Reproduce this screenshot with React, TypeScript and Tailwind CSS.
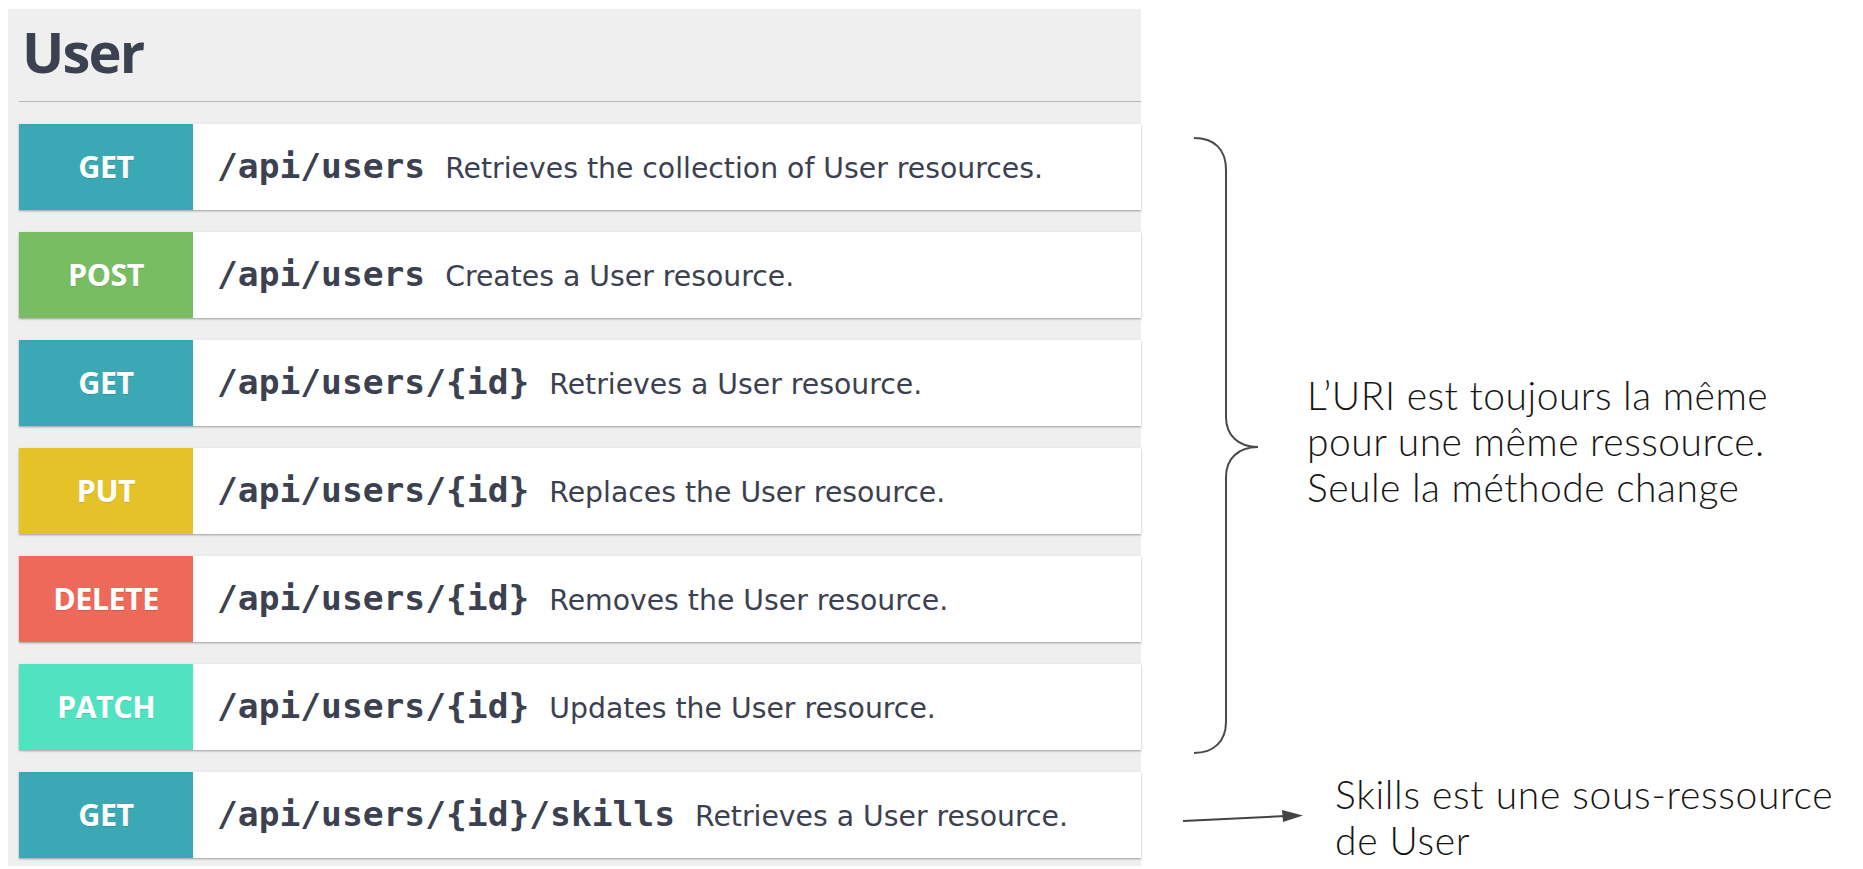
const endpoints = [
  { method: 'GET', color: 'bg-[#3aa9b5]', path: '/api/users', desc: 'Retrieves the collection of User resources.' },
  { method: 'POST', color: 'bg-[#78bd62]', path: '/api/users', desc: 'Creates a User resource.' },
  { method: 'GET', color: 'bg-[#3aa9b5]', path: '/api/users/{id}', desc: 'Retrieves a User resource.' },
  { method: 'PUT', color: 'bg-[#e5c228]', path: '/api/users/{id}', desc: 'Replaces the User resource.' },
  { method: 'DELETE', color: 'bg-[#ee6959]', path: '/api/users/{id}', desc: 'Removes the User resource.' },
  { method: 'PATCH', color: 'bg-[#50e3c2]', path: '/api/users/{id}', desc: 'Updates the User resource.' },
  { method: 'GET', color: 'bg-[#3aa9b5]', path: '/api/users/{id}/skills', desc: 'Retrieves a User resource.' },
];

function Row({ method, color, path, desc }: (typeof endpoints)[number]) {
  return (
    <div className="flex h-[86px] items-center bg-white shadow-[0_1px_2px_rgba(0,0,0,0.35)]">
      <div
        className={`${color} flex h-full w-[174px] shrink-0 items-center justify-center font-['Open_Sans',sans-serif] text-[30.5px] font-bold tracking-[-0.5px] text-white [text-shadow:0_1px_0_rgba(0,0,0,0.12)]`}
      >
        {method}
      </div>
      <span className="ml-[24px] font-['DejaVu_Sans_Mono',monospace] text-[34.6px] font-bold text-[#3b4151]">
        {path}
      </span>
      <span className="ml-[20px] translate-y-[2px] font-['DejaVu_Sans',sans-serif] text-[28.3px] text-[#3b4151]">
        {desc}
      </span>
    </div>
  );
}

export default function App() {
  return (
    <div className="flex h-[869px] w-[1863px] overflow-hidden bg-white">
      {/* swagger panel */}
      <div className="ml-[8px] mt-[9px] h-[857px] w-[1133px] shrink-0 bg-[#efefef] pl-[11px]">
        <div className="border-b border-[#b9b9b9] pb-[22px] pl-[3px] pt-[14px]">
          <h2 className="font-['Open_Sans',sans-serif] text-[56px] leading-none font-bold tracking-[-1.8px] text-[#3b4151]">
            User
          </h2>
        </div>
        <div className="mt-[22px] flex flex-col gap-[22px]">
          {endpoints.map((e, i) => (
            <Row key={i} {...e} />
          ))}
        </div>
      </div>

      {/* annotations */}
      <div className="flex flex-col pl-[41px] pt-[129px] font-['Lato',sans-serif] font-light text-[#151515]">
        <div className="flex items-center">
          <svg width="80" height="630" viewBox="0 0 80 630" fill="none" className="shrink-0">
            <path
              d="M12 9 C 32 9, 44 20, 44 41 L 44 288 C 44 306, 56 318, 76 318 C 56 318, 44 330, 44 348 L 44 593 C 44 612, 32 624, 12 624"
              stroke="#4a4a4a"
              strokeWidth="2"
            />
          </svg>
          <p className="mb-[6px] ml-[45px] text-[39px] leading-[46px] tracking-[0.5px]">
            L’URI est toujours la même
            <br />
            pour une même ressource.
            <br />
            Seule la méthode change
          </p>
        </div>
        <div className="mt-[12px] flex items-center">
          <svg width="125" height="20" viewBox="0 0 125 20" fill="none" className="shrink-0 translate-y-[1px]">
            <path d="M1 13 L104 8" stroke="#444" strokeWidth="2" />
            <path d="M100 2 L121 7.5 L101 14 Z" fill="#444" />
          </svg>
          <p className="ml-[28px] text-[39px] leading-[46px] tracking-[0.7px]">
            Skills est une sous-ressource
            <br />
            de User
          </p>
        </div>
      </div>
    </div>
  );
}
